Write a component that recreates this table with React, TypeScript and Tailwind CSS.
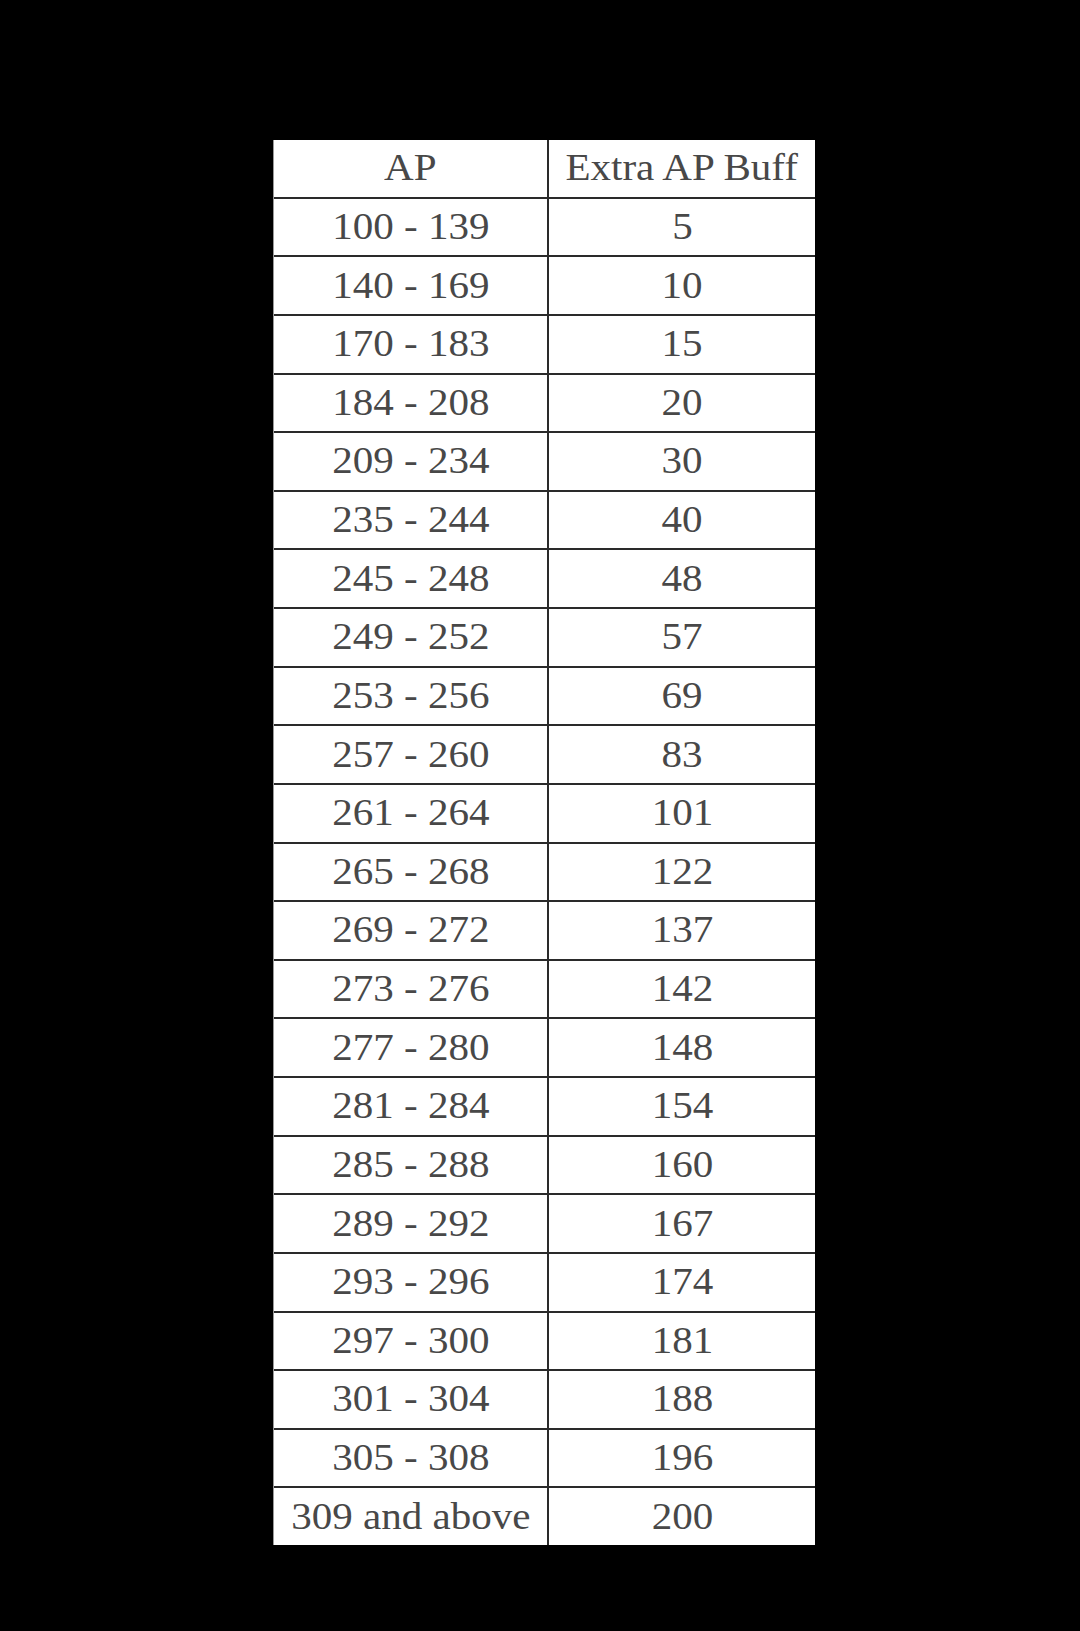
import React from 'react'

const rows: [string, string][] = [
  ['100 - 139', '5'],
  ['140 - 169', '10'],
  ['170 - 183', '15'],
  ['184 - 208', '20'],
  ['209 - 234', '30'],
  ['235 - 244', '40'],
  ['245 - 248', '48'],
  ['249 - 252', '57'],
  ['253 - 256', '69'],
  ['257 - 260', '83'],
  ['261 - 264', '101'],
  ['265 - 268', '122'],
  ['269 - 272', '137'],
  ['273 - 276', '142'],
  ['277 - 280', '148'],
  ['281 - 284', '154'],
  ['285 - 288', '160'],
  ['289 - 292', '167'],
  ['293 - 296', '174'],
  ['297 - 300', '181'],
  ['301 - 304', '188'],
  ['305 - 308', '196'],
  ['309 and above', '200'],
]

function Cell({ text, first }: { text: string; first?: boolean }) {
  return (
    <div
      className={
        'flex items-center justify-center overflow-hidden ' +
        (first ? 'border-r-2 border-[#2a2a2a]' : '')
      }
    >
      <span className="inline-block scale-x-[1.08] whitespace-nowrap pb-[2px] text-[38px] leading-none text-[#484848]">
        {text}
      </span>
    </div>
  )
}

export default function App() {
  const all: [string, string][] = [['AP', 'Extra AP Buff'], ...rows]
  return (
    <div
      className="min-h-[1631px] w-full bg-black pt-[140px] pl-[273px]"
      style={{ fontFamily: '"Liberation Serif", "Times New Roman", serif' }}
    >
      <div className="flex h-[1405px] w-[542px] flex-col border-l border-[#999] bg-white">
        {all.map(([a, b], i) => (
          <div
            key={a}
            className={
              'grid flex-1 grid-cols-[275px_1fr] ' +
              (i < all.length - 1 ? 'border-b-2 border-[#2a2a2a]' : '')
            }
          >
            <Cell text={a} first />
            <Cell text={b} />
          </div>
        ))}
      </div>
    </div>
  )
}
